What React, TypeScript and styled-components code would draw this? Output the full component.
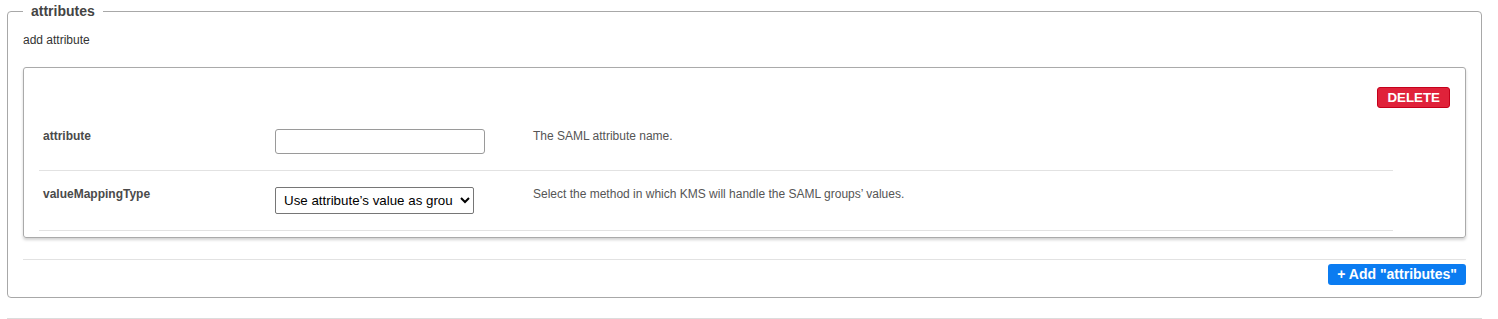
import React from "react";
import styled, { createGlobalStyle } from "styled-components";

const GlobalStyle = createGlobalStyle`
  html, body { margin: 0; padding: 0; background: #fff; }
  body { font-family: "Liberation Sans", Arial, sans-serif; }
`;

const Page = styled.div`
  padding: 0 17px 0 7px;
  width: 1475px;
`;

const Fieldset = styled.fieldset`
  margin: 0;
  padding: 0 15px 12px 15px;
  border: 1px solid #a8a8a8;
  border-radius: 4px;
  min-width: 0;
`;

const Legend = styled.legend`
  padding: 0 8px;
  font-size: 14px;
  font-weight: bold;
  line-height: 22px;
  color: #444;
`;

const Intro = styled.p`
  margin: 11px 0 20px;
  font-size: 12px;
  line-height: 14px;
  color: #333;
`;

const Card = styled.div`
  border: 1px solid #aaa;
  border-radius: 3px;
  box-shadow: 0 2px 3px rgba(0, 0, 0, 0.18);
  padding: 19px 15px 6px 15px;
  display: flex;
  flex-direction: column;
`;

const CardHeader = styled.div`
  display: flex;
  justify-content: flex-end;
  margin-bottom: 5px;
`;

const DeleteButton = styled.button`
  height: 21px;
  padding: 0 9px;
  border: 1px solid #c4001b;
  border-radius: 3px;
  background: #e0223a;
  color: #fff;
  font-family: "Liberation Sans", Arial, sans-serif;
  font-size: 13.33px;
  font-weight: bold;
  line-height: 19px;
  cursor: pointer;
`;

const Rows = styled.div`
  margin-right: 57px;
  display: flex;
  flex-direction: column;
`;

const Row = styled.div`
  display: grid;
  grid-template-columns: 232px 258px 1fr;
  align-items: start;
  padding: 16px 4px;
  border-bottom: 1px solid #e2e2e2;
`;

const Label = styled.div`
  font-size: 12px;
  font-weight: bold;
  line-height: 14px;
  color: #4a4a4a;
`;

const Description = styled.div`
  font-size: 12px;
  line-height: 14px;
  color: #555;
`;

const TextInput = styled.input`
  box-sizing: border-box;
  width: 210px;
  height: 25px;
  margin: 0;
  border: 1px solid #9a9a9a;
  border-radius: 3px;
  padding: 2px 6px;
  font-family: "Liberation Sans", Arial, sans-serif;
  font-size: 13.33px;
`;

const Select = styled.select`
  box-sizing: border-box;
  width: 199px;
  height: 27px;
  margin: 0;
  border: 1px solid #767676;
  border-radius: 2px;
  padding: 0 4px;
  background: #fff;
  color: #000;
  font-family: "Liberation Sans", Arial, sans-serif;
  font-size: 13.33px;
`;

const Footer = styled.div`
  margin-top: 21px;
  border-top: 1px solid #e2e2e2;
  padding-top: 4px;
  display: flex;
  justify-content: flex-end;
`;

const AddButton = styled.button`
  height: 21px;
  padding: 0 9px;
  border: none;
  border-radius: 3px;
  background: #0b7cf1;
  color: #fff;
  font-family: "Liberation Sans", Arial, sans-serif;
  font-size: 14px;
  font-weight: bold;
  line-height: 21px;
  cursor: pointer;
`;

const Rule = styled.hr`
  margin: 20px 0 0;
  border: none;
  border-top: 1px solid #dcdcdc;
  height: 0;
`;

export default function App() {
  return (
    <>
      <GlobalStyle />
      <Page>
        <Fieldset>
          <Legend>attributes</Legend>
          <Intro>add attribute</Intro>
          <Card>
            <CardHeader>
              <DeleteButton type="button">DELETE</DeleteButton>
            </CardHeader>
            <Rows>
              <Row>
                <Label>attribute</Label>
                <div>
                  <TextInput type="text" />
                </div>
                <Description>The SAML attribute name.</Description>
              </Row>
              <Row>
                <Label>valueMappingType</Label>
                <div>
                  <Select defaultValue="name">
                    <option value="name">Use attribute’s value as group name</option>
                    <option value="id">Use attribute’s value as group id</option>
                  </Select>
                </div>
                <Description>
                  Select the method in which KMS will handle the SAML groups’ values.
                </Description>
              </Row>
            </Rows>
          </Card>
          <Footer>
            <AddButton type="button">+ Add "attributes"</AddButton>
          </Footer>
        </Fieldset>
        <Rule />
      </Page>
    </>
  );
}
